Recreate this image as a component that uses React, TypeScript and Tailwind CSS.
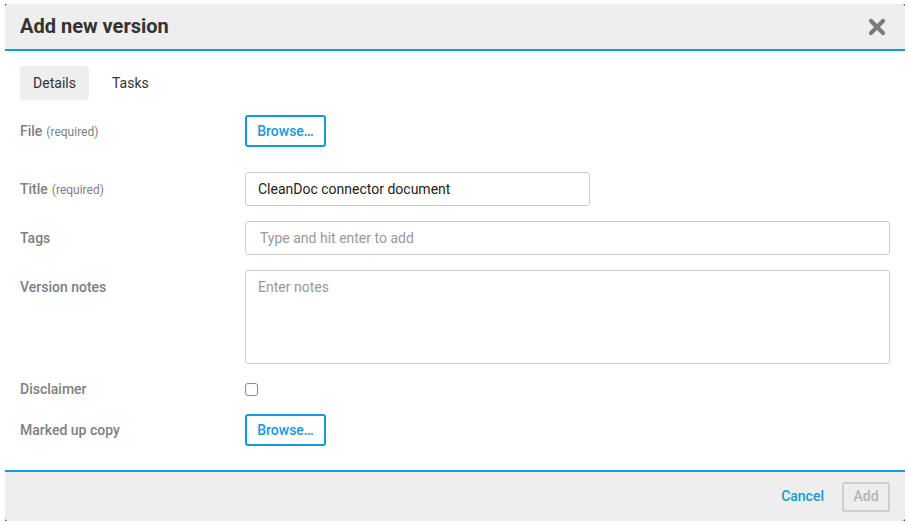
import React from 'react';

const font = { fontFamily: 'Roboto, "Helvetica Neue", Arial, sans-serif' };

const BrowseButton: React.FC = () => (
  <button
    type="button"
    className="h-[32px] w-[81px] rounded-[3px] border-2 border-[#139bd8] bg-white text-[14px] font-medium text-[#139bd8]"
  >
    Browse…
  </button>
);

const App: React.FC = () => {
  return (
    <div className="h-[525px] w-[908px] bg-white pl-[5px] pt-[4px]" style={font}>
      <div className="h-[517px] w-[900px] bg-[#555]">
        <div className="flex h-full w-full flex-col overflow-hidden rounded-[4px] bg-white">
          <header className="flex h-[47px] shrink-0 items-center justify-between border-b-2 border-[#139bd8] bg-[#eeeeee] pl-[15px] pr-[19px]">
            <h2 className="mb-[1px] text-[20px] font-bold text-[#333]">Add new version</h2>
            <svg width="18" height="18" viewBox="0 0 18 18" className="mt-[1px]">
              <path d="M3 3 L15 15 M15 3 L3 15" stroke="#7a7a7a" strokeWidth="4.2" strokeLinecap="round" />
            </svg>
          </header>

          <div className="flex-1 px-[15px] pt-[15px]">
            <div className="flex h-[34px] gap-[4px]">
              <div className="flex h-[34px] w-[69px] items-center justify-center rounded-[4px] bg-[#eeeeee] text-[14px] text-[#333]">
                Details
              </div>
              <div className="flex h-[34px] items-center px-[19px] text-[14px] text-[#333]">Tasks</div>
            </div>

            <div className="mt-[15px] flex h-[32px] items-center">
              <label className="flex w-[225px] items-baseline gap-[4px] text-[14px] font-medium leading-none text-[#808080]">
                File <span className="text-[12px] font-normal">(required)</span>
              </label>
              <BrowseButton />
            </div>

            <div className="mt-[25px] flex h-[34px] items-center">
              <label className="flex w-[225px] items-baseline gap-[4px] text-[14px] font-medium leading-none text-[#808080]">
                Title <span className="text-[12px] font-normal">(required)</span>
              </label>
              <input
                type="text"
                defaultValue="CleanDoc connector document"
                className="h-[34px] w-[345px] rounded-[3px] border border-[#cccccc] px-[12px] text-[14px] text-[#222] outline-none"
              />
            </div>

            <div className="mt-[15px] flex h-[34px] items-center">
              <label className="w-[225px] text-[14px] font-medium leading-none text-[#808080]">Tags</label>
              <input
                type="text"
                placeholder="Type and hit enter to add"
                className="h-[34px] flex-1 rounded-[3px] border border-[#cccccc] px-[14px] text-[14px] text-[#222] outline-none placeholder:text-[#999]"
              />
            </div>

            <div className="mt-[15px] flex h-[94px] items-start">
              <label className="w-[225px] text-[14px] font-medium leading-[34px] text-[#808080]">Version notes</label>
              <textarea
                placeholder="Enter notes"
                className="block h-[94px] flex-1 resize-none rounded-[3px] border border-[#cccccc] px-[12px] py-[6px] text-[14px] leading-[20px] text-[#222] outline-none placeholder:text-[#999]"
              />
            </div>

            <div className="mt-[15px] flex h-[20px] items-center">
              <label className="w-[225px] text-[14px] font-medium leading-none text-[#808080]">Disclaimer</label>
              <span className="block h-[13px] w-[13px] rounded-[3px] border border-[#8a8a8a] bg-white" />
            </div>

            <div className="mt-[15px] flex h-[32px] items-center">
              <label className="w-[225px] text-[14px] font-medium leading-none text-[#808080]">Marked up copy</label>
              <BrowseButton />
            </div>
          </div>

          <footer className="flex h-[51px] shrink-0 items-center justify-end gap-[18px] border-t-2 border-[#139bd8] bg-[#eeeeee] pr-[15px]">
            <span className="text-[14px] font-medium text-[#139bd8]">Cancel</span>
            <button
              type="button"
              className="h-[30px] w-[48px] rounded-[3px] border-2 border-[#cfcfcf] text-[14px] font-medium text-[#b5b5b5]"
            >
              Add
            </button>
          </footer>
        </div>
      </div>
    </div>
  );
};

export default App;
